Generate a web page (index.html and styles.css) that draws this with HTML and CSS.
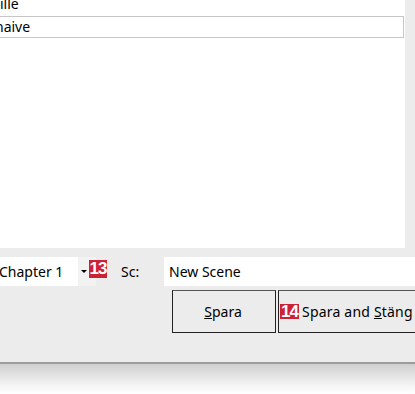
FILE: index.html
```html
<!DOCTYPE html>
<html lang="en">
<head>
	<meta charset="UTF-8">
	<title>Scene</title>
	<link rel="stylesheet" href="styles.css">
</head>
<body>
	<div class="window">
		<div class="list-row">
			<div class="list">
				<div class="item first">ille</div>
				<div class="item selected"><span class="clip">naive</span></div>
			</div>
		</div>
		<div class="fields">
			<div class="combo">
				<span class="combo-text">Chapter 1</span>
				<span class="combo-btn"><span class="arrow"></span></span>
				<span class="badge b13">13</span>
			</div>
			<span class="label">Sc:</span>
			<div class="textbox">New Scene</div>
		</div>
		<div class="buttons">
			<div class="btn save"><span><u>S</u>para</span></div>
			<div class="btn save-close"><span class="badge b14">14</span><span class="wide">Spara and <u>S</u>täng</span></div>
		</div>
	</div>
	<div class="shadow"></div>
</body>
</html>
```
FILE: styles.css
```css
* {
	margin: 0;
	padding: 0;
	box-sizing: border-box;
}

body {
	width: 415px;
	height: 394px;
	overflow: hidden;
	background: #fff;
	font-family: "Noto Sans", "Open Sans", sans-serif;
	font-size: 14px;
	color: #000;
}

.window {
	height: 364px;
	background: #ececec;
	border-bottom: 2px solid #9c9c9c;
	overflow: hidden;
}

.list-row {
	height: 248px;
	padding-right: 10px;
}

.list {
	height: 100%;
	background: #fff;
	overflow: hidden;
}

.item {
	height: 22px;
	line-height: 20px;
	white-space: nowrap;
	overflow: hidden;
}

.first {
	margin-top: -6px;
}

.selected {
	margin-right: 1px;
	border: 1px solid #c6c6c6;
	border-left: none;
}

.clip {
	display: inline-block;
	margin-left: -5px;
}

.fields {
	display: flex;
	align-items: center;
	height: 30px;
	margin-top: 8px;
}

.combo {
	position: relative;
	display: flex;
	flex-shrink: 0;
	width: 96px;
	height: 29px;
	background: #fff;
}

.combo-text {
	flex: 1;
	line-height: 29px;
	margin-left: -1px;
}

.combo-btn {
	display: flex;
	align-items: center;
	justify-content: center;
	width: 18px;
	background: #f2f2f2;
}

.arrow {
	width: 0;
	height: 0;
	margin-left: -6px;
	border-left: 3px solid transparent;
	border-right: 3px solid transparent;
	border-top: 3px solid #000;
}

.badge {
	display: inline-flex;
	align-items: center;
	justify-content: center;
	flex-shrink: 0;
	background: #cc2236;
	color: #fff;
	font-family: "Liberation Sans", sans-serif;
	font-weight: bold;
	font-size: 17px;
	letter-spacing: -1px;
}

.b13 {
	position: absolute;
	left: 89px;
	top: 3px;
	width: 18px;
	height: 18px;
}

.b14 {
	width: 19px;
	height: 15px;
	margin-right: 3px;
}

.label {
	flex-shrink: 0;
	margin-left: 25px;
	width: 43px;
}

.textbox {
	flex: 1;
	height: 29px;
	line-height: 29px;
	padding-left: 5px;
	background: #fff;
}

.buttons {
	display: flex;
	gap: 2px;
	height: 43px;
	margin-top: 4px;
	padding-left: 172px;
}

.btn {
	display: flex;
	align-items: center;
	flex-shrink: 0;
	height: 43px;
	border: 1px solid #222;
	border-top-color: #555;
	background: #ececec;
	white-space: nowrap;
}

.save {
	width: 104px;
	justify-content: center;
	padding-right: 2px;
}

.save-close {
	width: 160px;
	padding-left: 1px;
}

.wide {
	letter-spacing: 0.2px;
}

.shadow {
	height: 30px;
	background: linear-gradient(#cfcfcf, #f4f4f4 70%, #fff);
}
```
